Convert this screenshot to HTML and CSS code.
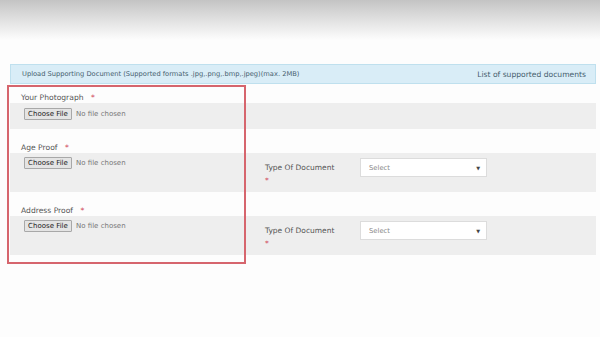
FILE: index.html
```html
<!DOCTYPE html>
<html>
<head>
<meta charset="utf-8">
<link rel="stylesheet" href="styles.css">
</head>
<body>
<div class="topbar"></div>
<div class="panel">
  <div class="info">
    <span>Upload Supporting Document (Supported formats .jpg,.png,.bmp,.jpeg)(max. 2MB)</span>
    <span class="list">List of supported documents</span>
  </div>
  <div class="form">
    <div class="label first">Your Photograph <span class="req">*</span></div>
    <div class="row short">
      <div class="file"><span class="btn">Choose File</span><span class="nofile">No file chosen</span></div>
    </div>
    <div class="label">Age Proof <span class="req">*</span></div>
    <div class="row">
      <div class="file"><span class="btn">Choose File</span><span class="nofile">No file chosen</span></div>
      <div class="doctype">Type Of Document<br><span class="req">*</span></div>
      <div class="select"><span>Select</span><span class="arrow">▼</span></div>
    </div>
    <div class="label">Address Proof <span class="req">*</span></div>
    <div class="row">
      <div class="file"><span class="btn">Choose File</span><span class="nofile">No file chosen</span></div>
      <div class="doctype">Type Of Document<br><span class="req">*</span></div>
      <div class="select"><span>Select</span><span class="arrow">▼</span></div>
    </div>
    <div class="highlight"></div>
  </div>
</div>
</body>
</html>
```
FILE: styles.css
```css
html, body {
  margin: 0;
  padding: 0;
  background: #fdfdfd;
  font-family: "DejaVu Sans", Verdana, sans-serif;
  color: #555;
}
.topbar {
  height: 40px;
  background: linear-gradient(to bottom, #c4c4c4 0%, #dedede 45%, #fdfdfd 100%);
}
.panel {
  margin: 24px 4px 0 10px;
}
.info {
  height: 20px;
  box-sizing: border-box;
  background: #d9edf7;
  border: 1px solid #bfe0ee;
  display: flex;
  justify-content: space-between;
  align-items: center;
  padding: 0 9px 0 11px;
  font-size: 6.7px;
  color: #46606e;
}
.info .list {
  font-size: 7.6px;
}
.form {
  position: relative;
  padding-bottom: 9px;
}
.label {
  font-size: 7.6px;
  line-height: 10px;
  color: #555;
  box-sizing: border-box;
  padding: 14px 0 0 11px;
  height: 24px;
}
.label.first {
  padding-top: 9px;
  height: 19px;
}
.req {
  color: #d0485a;
  margin-left: 5px;
}
.row {
  background: #eeeeee;
  height: 39px;
  display: flex;
  align-items: flex-start;
}
.row.short {
  height: 26px;
}
.row.short .file {
  padding-top: 5px;
}
.file {
  width: 241px;
  padding: 4px 0 0 14px;
  display: flex;
  align-items: center;
}
.btn {
  display: inline-block;
  box-sizing: border-box;
  height: 12px;
  width: 48px;
  line-height: 10px;
  text-align: center;
  font-size: 7px;
  color: #222;
  background: #e4e4e4;
  border: 1px solid #a8a8a8;
  border-radius: 1px;
}
.nofile {
  font-size: 7px;
  color: #777;
  margin-left: 4px;
}
.doctype {
  width: 95px;
  padding-top: 8px;
  font-size: 7.5px;
  line-height: 13px;
  color: #555;
}
.doctype .req {
  margin-left: 0;
}
.select {
  margin-top: 5px;
  width: 127px;
  height: 19px;
  box-sizing: border-box;
  background: #fff;
  border: 1px solid #dcdcdc;
  display: flex;
  justify-content: space-between;
  align-items: center;
  padding: 0 6px 0 8px;
  font-size: 6.8px;
  color: #888;
}
.arrow {
  font-size: 5px;
  color: #444;
}
.highlight {
  position: absolute;
  left: -3px;
  top: 1px;
  bottom: 0;
  width: 235px;
  border: 2px solid #d6656d;
  pointer-events: none;
}
```
